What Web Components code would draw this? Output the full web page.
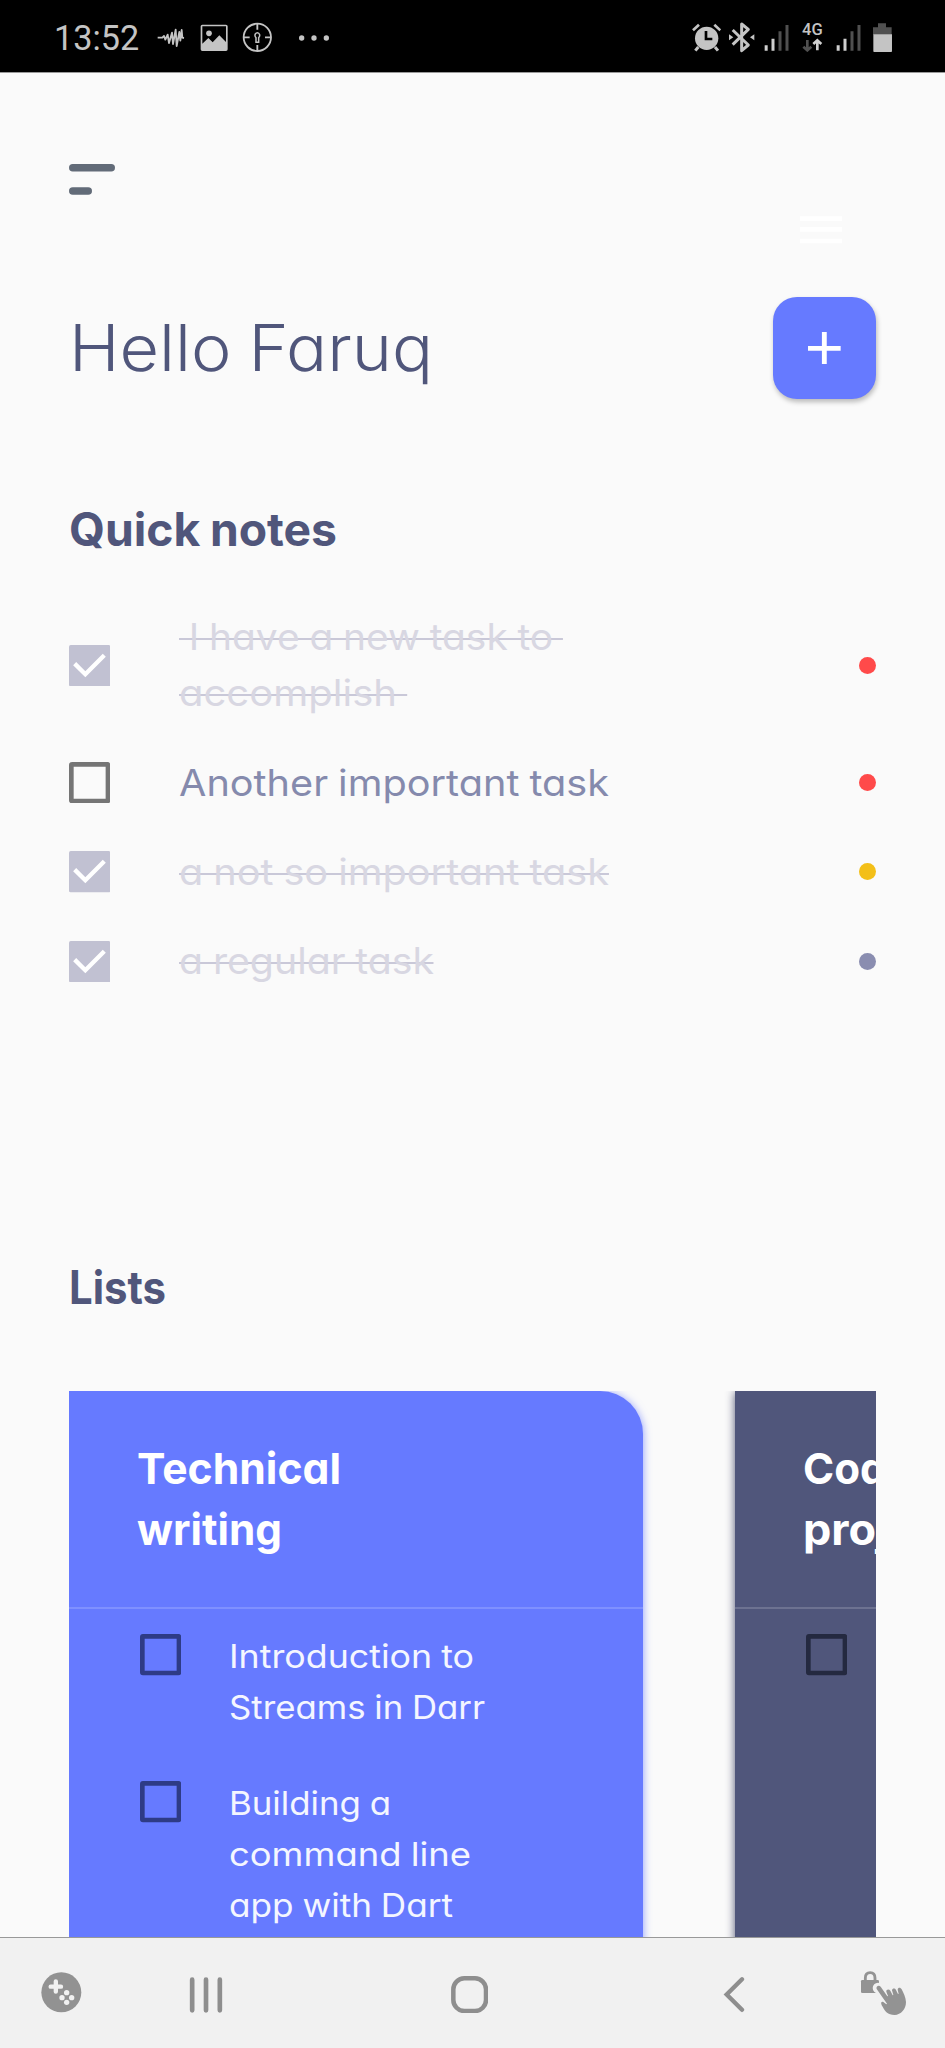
<!DOCTYPE html>
<html lang="en">
<head>
<meta charset="utf-8">
<title>Notes</title>
<style>
html,body{margin:0;padding:0;background:#fafafa}
body{width:945px;height:2048px;overflow:hidden;display:flex;flex-direction:column;font-family:Inter,"Open Sans",sans-serif}
</style>
</head>
<body>
<status-bar></status-bar>
<app-screen>
  <top-bar></top-bar>
  <greeting-row><text-line w="364">Hello Faruq</text-line></greeting-row>
  <section-title style="--gap:99.6px"><text-line w="268">Quick notes</text-line></section-title>
  <task-list>
    <task-item done dot="#ff4a4a"><text-line w="384" struck>&nbsp;I have a new task to&nbsp;</text-line><text-line w="228" struck>accomplish&nbsp;</text-line></task-item>
    <task-item dot="#ff4a4a"><text-line w="430">Another important task</text-line></task-item>
    <task-item done dot="#f3bf18"><text-line w="430" struck>a not so important task</text-line></task-item>
    <task-item done dot="#8a8db0"><text-line w="255" struck>a regular task</text-line></task-item>
  </task-list>
  <section-title style="--gap:267.9px"><text-line w="97">Lists</text-line></section-title>
  <card-scroller>
    <list-card class="first">
      <text-line slot="title" w="204">Technical</text-line>
      <text-line slot="title" w="145">writing</text-line>
      <card-item><text-line w="245">Introduction to</text-line><text-line w="256">Streams in Darr</text-line></card-item>
      <card-item><text-line w="162">Building a</text-line><text-line w="242">command line</text-line><text-line w="224">app with Dart</text-line></card-item>
    </list-card>
    <list-card dark>
      <text-line slot="title" w="148">Coding</text-line>
      <text-line slot="title" w="155">project</text-line>
      <card-item></card-item>
    </list-card>
  </card-scroller>
</app-screen>
<nav-bar></nav-bar>

<script>
const define = (name, html, init) => {
  const t = document.createElement('template');
  t.innerHTML = html;
  customElements.define(name, class extends HTMLElement {
    connectedCallback() {
      if (this.shadowRoot) return;
      this.attachShadow({mode: 'open'}).append(t.content.cloneNode(true));
      if (init) init(this, this.shadowRoot);
    }
  });
};

/* name: [viewBox, markup]; three view units to one pixel */
const ICONS = {
  wave: ['468 80 84 64', '<path d="M470 112h14l5-5 4 11 7-15 4 25 9-31 3 34 8-43 3 49 8-42 3 26 4-32 2 23 5 1" fill="none" stroke="#c4c4c4" stroke-width="5.500" stroke-linejoin="round"/>'],
  image: ['598 70 86 84', '<path fill="#c4c4c4" fill-rule="evenodd" d="M605 72h71q5 0 5 5v69q0 5-5 5h-71q-5 0-5-5V77q0-5 5-5zM605 77v52l18-17 13 13 20-21 20 20V77z"/><circle cx="625" cy="98" r="8.5" fill="#c4c4c4"/>'],
  target: ['726 66 92 92', '<g fill="none" stroke="#c4c4c4" stroke-width="5.500"><circle cx="772" cy="112" r="41"/><path d="M772 72v17M772 135v17M732 112h17M795 112h17"/><path stroke-width="4.500" d="M768 127v-14q-4-4-3-9 2-6 7-6t7 6q1 5-3 9v14z"/></g>'],
  dots: ['892 98 96 24', '<g fill="#c4c4c4"><circle cx="903" cy="110" r="8"/><circle cx="940" cy="110" r="8"/><circle cx="977" cy="110" r="8"/></g>'],
  alarm: ['62 68 92 86', '<circle cx="109" cy="114" r="35" fill="#c4c4c4"/><path d="M68 90l18-17M150 90l-18-17" stroke="#c4c4c4" stroke-width="8"/><path d="M84 140l-9 11M134 140l9 11" stroke="#c4c4c4" stroke-width="9"/><path d="M107 92v24h19" fill="none" stroke="#000" stroke-width="8"/>'],
  bt: ['174 66 82 92', '<path d="M188 90l47 45-20 17V72l20 16-47 46" fill="none" stroke="#c4c4c4" stroke-width="9" stroke-linejoin="round"/><path d="M177 103l13 9-13 9zM253 103l-13 9 13 9z" fill="#c4c4c4"/>'],
  signal: ['282 70 76 84', '<path d="M288.500 134v16M309 114v36" stroke="#d0d0d0" stroke-width="9"/><path d="M330 92v58M351 73v77" stroke="#505050" stroke-width="9"/>'],
  arrows: ['394 114 66 42', '<path d="M413 120v30M401 140l12 11 12-11" fill="none" stroke="#505050" stroke-width="8"/><path d="M443 151v-29M431 132l12-11 12 11" fill="none" stroke="#d0d0d0" stroke-width="8"/>'],
  battery: ['606 68 62 88', '<path fill="#505050" d="M624 69h24v12h17v22h-56V81h15z"/><path fill="#c4c4c4" d="M610 102h56v49q0 5-5 5h-46q-5 0-5-5z"/>'],
  menu: ['0 0 138 93', '<path fill="none" stroke="#626b78" stroke-width="22.500" stroke-linecap="round" d="M11.300 11.300h115.400M11.300 81h46.400"/>'],
  ghost: ['0 0 126 84', '<path stroke="#fff" stroke-width="14" d="M0 8h126M0 40h126M0 75h126"/>'],
  plus: ['0 0 98 98', '<path stroke="#fff" stroke-width="14.500" d="M0 49h98M49 0v98"/>'],
  game: ['124 157 122 122', '<circle cx="185" cy="218" r="60" fill="#929292"/><path d="M153 201h31M168.500 185v31" stroke="#f1f1f1" stroke-width="13" stroke-linecap="round"/><g fill="#f1f1f1"><circle cx="201" cy="219" r="8"/><circle cx="187" cy="234" r="8"/><circle cx="216" cy="234" r="8"/><circle cx="201" cy="248" r="8"/></g>'],
  recents: ['566 170 102 108', '<path d="M575.500 178v92M617 178v92M658.500 178v92" stroke="#8e8e8e" stroke-width="14" stroke-linecap="round"/>'],
  home: ['1353 167 112 112', '<rect x="1360" y="174" width="98" height="98" rx="33" fill="none" stroke="#8e8e8e" stroke-width="13.500"/>'],
  back: ['190 168 66 111', '<path d="M247 178l-46 45.500 46 46" fill="none" stroke="#8e8e8e" stroke-width="13" stroke-linecap="round"/>'],
  touch: ['600 150 140 137', '<path d="M616 186v-12q0-16 14.500-16t14.500 16v12" fill="none" stroke="#939393" stroke-width="8.500"/><rect x="603" y="180" width="54" height="39" rx="4" fill="#939393"/><circle cx="654" cy="204" r="16" fill="#f1f1f1"/><path fill="#939393" d="M650 207c-3-7 6-13 12-7l20 29 2-1-5-13c-1-7 8-9 12-3l7 14 2-1-4-14c1-7 9-7 12-1l6 12 2-1-3-12c1-8 9-7 12-1 6 12 12 24 13 38 0 22-15 38-34 39-21-1-30-12-36-25-4-6-8-16 1-15l10 8 2-2z"/>']
};
define('app-icon', '<style>:host{display:block;flex:none;margin-left:var(--x,0)}svg{display:block}</style>', (el, root) => {
  const [vb, body] = ICONS[el.getAttribute('name')];
  const [, , w, h] = vb.split(' ').map(Number);
  root.innerHTML += `<svg viewBox="${vb}" width="${w / 3}" height="${h / 3}">${body}</svg>`;
});

define('check-box', `<style>
:host{display:block;flex:none;width:41.300px;height:41.300px}
svg{display:block}.on{display:none}
:host([checked]) .on{display:block}:host([checked]) .off{display:none}
</style>
<svg class="off" viewBox="0 0 124 124" width="41.300" height="41.300"><rect x="7" y="7" width="110" height="110" rx="2" fill="none" stroke="var(--box,#757575)" stroke-width="14"/></svg>
<svg class="on" viewBox="0 0 124 124" width="41.300" height="41.300"><rect width="124" height="124" rx="5" fill="#c1c1d2"/><path d="M17 56l32 32 57-57" fill="none" stroke="#fff" stroke-width="13"/></svg>`);

define('status-bar', `<style>
:host{display:flex;flex:none;height:72px;background:#000;border-bottom:1px solid #999;color:#c4c4c4;font-family:Roboto,sans-serif}
.l,.r{display:flex;align-items:center;height:75px}
.l{margin-left:54px}.r{margin-left:auto;margin-right:52.300px}
.time{width:102.700px;font-size:34.200px;line-height:75px;padding-top:2px}
.net{display:flex;flex-direction:column;align-items:center;margin-left:12px;width:22px;height:30px}
.net b{font:500 16.500px/14px Roboto,sans-serif;height:15px}
</style>
<div class="l"><div class="time">13:52</div><app-icon name="wave"></app-icon><app-icon name="image" style="--x:15px"></app-icon><app-icon name="target" style="--x:14px"></app-icon><app-icon name="dots" style="--x:24.700px"></app-icon></div>
<div class="r"><app-icon name="alarm"></app-icon><app-icon name="bt" style="--x:6.700px"></app-icon><app-icon name="signal" style="--x:8.700px"></app-icon><div class="net"><b>4G</b><app-icon name="arrows"></app-icon></div><app-icon name="signal" style="--x:13px"></app-icon><app-icon name="battery" style="--x:10.300px"></app-icon></div>`);

define('app-screen', `<style>:host{display:block;flex:none;box-sizing:border-box;height:1864px;padding:0 69px;overflow:hidden;background:#fafafa;color:#50567b}</style><slot></slot>`);

define('top-bar', `<style>:host{display:flex;justify-content:space-between;height:224px}.m{margin-top:91px}.g{margin:142.500px 34px 0 0}</style>
<app-icon class="m" name="menu"></app-icon><app-icon class="g" name="ghost"></app-icon>`);

define('greeting-row', `<style>:host{display:flex;align-items:center;justify-content:space-between;height:102px;font-size:64px;font-weight:300;line-height:82px}
button{display:flex;align-items:center;justify-content:center;width:103.500px;height:101.500px;padding:0;border:0;border-radius:24px;background:#667aff;box-shadow:1px 3px 5px rgba(0,0,0,.26)}</style>
<slot></slot><button aria-label="Add"><app-icon name="plus"></app-icon></button>`);

define('section-title', `<style>:host{display:block;margin-top:var(--gap);font-size:46px;font-weight:700;line-height:60px}</style><slot></slot>`);
define('task-list', `<style>:host{display:flex;flex-direction:column;gap:33.400px;margin-top:50.600px}</style><slot></slot>`);

define('task-item', `<style>
:host{display:flex;align-items:center;font-size:37px;line-height:56px;color:#858aad}
:host([done]){color:#d8d7e2}
.text{margin-left:68.700px;flex:1}
.dot{width:17px;height:17px;border-radius:50%}
</style><check-box></check-box><div class="text"><slot></slot></div><div class="dot"></div>`, (el, root) => {
  root.querySelector('.dot').style.background = el.getAttribute('dot');
  if (el.hasAttribute('done')) root.querySelector('check-box').setAttribute('checked', '');
});

define('card-scroller', `<style>:host{display:flex;gap:92px;height:546px;margin-top:73.700px;overflow:hidden}</style><slot></slot>`);

define('list-card', `<style>
:host{display:block;flex:none;width:574px;height:700px;background:#667aff;border-radius:0 43px 0 0;box-shadow:0 1px 9px rgba(102,122,255,.75);color:#fff;--box:#2e3b86}
:host([dark]){background:#50567b;box-shadow:0 1px 10px rgba(50,55,90,.85);--box:#242940}
header{padding:46.700px 68px 46.300px;border-bottom:2px solid rgba(255,255,255,.17);font-size:43px;font-weight:700;line-height:61.500px}
.items{display:flex;flex-direction:column;gap:45px;padding:22.500px 0 0 71px}
</style><header><slot name="title"></slot></header><div class="items"><slot></slot></div>`);

define('card-item', `<style>:host{display:flex;font-size:32.500px;line-height:51px;color:#f4f6ff}check-box{margin-top:2.800px}.t{margin-left:47.700px}</style><check-box></check-box><div class="t"><slot></slot></div>`);

define('nav-bar', `<style>
:host{display:flex;box-sizing:border-box;height:111px;border-top:1px solid #999;background:#f1f1f1}
app-icon{height:max-content}
</style>
<app-icon name="game" style="--x:41.300px;margin-top:34.300px"></app-icon>
<app-icon name="recents" style="--x:106.700px;margin-top:38.700px"></app-icon>
<app-icon name="home" style="--x:228.300px;margin-top:37.700px"></app-icon>
<app-icon name="back" style="--x:235px;margin-top:38px"></app-icon>
<app-icon name="touch" style="--x:114.700px;margin-top:32px"></app-icon>`);

/* One line of text, its letters widened to fill the width given in "w".
   Defined last: its font comes from the elements around it. */
define('text-line', `<style>
:host{display:block;white-space:pre}
span{display:inline-block;vertical-align:top;transform-origin:0 0;font-feature-settings:"cv11";word-spacing:-.03em}
:host([struck]) span{background:linear-gradient(#c9c8d8,#c9c8d8) 0 29px/100% 2px no-repeat}
</style><span><slot></slot></span>`, (el, root) => {
  const span = root.querySelector('span');
  span.style.transform = `scaleX(${el.getAttribute('w') / span.getBoundingClientRect().width})`;
});
</script>
</body>
</html>
